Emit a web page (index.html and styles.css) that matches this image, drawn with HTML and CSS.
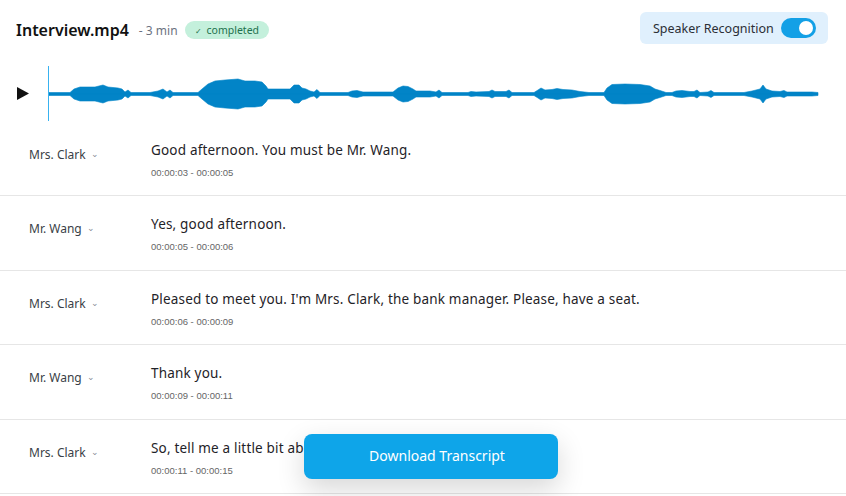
FILE: index.html
```html
<!DOCTYPE html>
<html lang="en">
<head>
<meta charset="utf-8">
<title>Interview.mp4</title>
<link rel="stylesheet" href="styles.css">
</head>
<body>
<div class="page">
  <header class="header">
    <div class="title-group">
      <h1 class="title">Interview.mp4</h1>
      <span class="duration">- 3 min</span>
      <span class="badge"><span class="check">&#10003;</span>completed</span>
    </div>
    <div class="speaker-box">
      <span class="speaker-label">Speaker Recognition</span>
      <span class="toggle"><span class="knob"></span></span>
    </div>
  </header>

  <div class="player">
    <svg class="play" width="12" height="13" viewBox="0 0 12 13"><polygon points="0,0 12,6.5 0,13" fill="#111"/></svg>
    <svg class="wave" width="780" height="57.5" viewBox="44 -30 780 57.5">
      <defs>
        <polygon id="half" points="49,0 49,-1.5 70,-1.5 74,-5 80,-7 95,-7 103,-9 108,-7 118,-6 122,-5 125,-2 128,-4 131,-1.5 150,-1.5 158,-3 163,-5 167,-2 170,-4 173,-1.5 198,-1.5 202,-5 208,-10 215,-13 225,-14 238,-15 245,-13 255,-13 262,-12 266,-8 268,-5 290,-5 294,-9 299,-9 302,-6 306,-5 310,-3 314,-2 317,-4.5 320,-1.5 348,-1.5 352,-3 357,-3.5 363,-2 380,-2 393,-2 398,-6 403,-8 408,-7.5 413,-5 416,-3 430,-3 436,-2 439,-4 442,-1.5 468,-1.5 471,-2.5 476,-2 489,-2.5 492,-4 495,-2.5 506,-2.5 509,-4 512,-1.5 534,-1.5 538,-4 541,-6 545,-4 552,-4.5 557,-5.5 563,-4.5 572,-4 580,-2.5 589,-1.5 604,-1.5 607,-6 612,-9.5 625,-10 640,-9.5 650,-8 655,-5 660,-3.5 666,-1.5 672,-1.5 676,-3 682,-3.5 690,-2.5 694,-2.5 697,-4 700,-1.5 708,-2 711,-3.5 714,-1.5 744,-1.5 752,-3 760,-5 763,-9 766,-5 772,-3 780,-2.5 784,-3.5 787,-2 800,-2 812,-2 818,-1.5 818,0"/>
      </defs>
      <g fill="#0284c7" stroke="#0284c7" stroke-width="0.6" stroke-linejoin="round">
        <use href="#half"/>
        <use href="#half" transform="scale(1,-1)"/>
      </g>
      <line x1="48.5" y1="-28" x2="48.5" y2="27" stroke="#38b2f0" stroke-width="1"/>
    </svg>
  </div>

  <div class="rows">
    <div class="row">
      <div class="speaker">Mrs. Clark <span class="chev">&#8964;</span></div>
      <div class="content">
        <p class="text">Good afternoon. You must be Mr. Wang.</p>
        <p class="time">00:00:03 - 00:00:05</p>
      </div>
    </div>
    <div class="row">
      <div class="speaker">Mr. Wang <span class="chev">&#8964;</span></div>
      <div class="content">
        <p class="text">Yes, good afternoon.</p>
        <p class="time">00:00:05 - 00:00:06</p>
      </div>
    </div>
    <div class="row">
      <div class="speaker">Mrs. Clark <span class="chev">&#8964;</span></div>
      <div class="content">
        <p class="text">Pleased to meet you. I'm Mrs. Clark, the bank manager. Please, have a seat.</p>
        <p class="time">00:00:06 - 00:00:09</p>
      </div>
    </div>
    <div class="row">
      <div class="speaker">Mr. Wang <span class="chev">&#8964;</span></div>
      <div class="content">
        <p class="text">Thank you.</p>
        <p class="time">00:00:09 - 00:00:11</p>
      </div>
    </div>
    <div class="row">
      <div class="speaker">Mrs. Clark <span class="chev">&#8964;</span></div>
      <div class="content">
        <p class="text">So, tell me a little bit about yourself.</p>
        <p class="time">00:00:11 - 00:00:15</p>
      </div>
    </div>
  </div>

  <button class="download">Download Transcript</button>
</div>
</body>
</html>
```

FILE: styles.css
```css
* { box-sizing: border-box; }
html, body { margin: 0; padding: 0; background: #fff; }
body {
  font-family: "Noto Sans", "Liberation Sans", sans-serif;
  color: #1f2328;
  width: 846px;
  height: 496px;
  overflow: hidden;
}
.page { position: relative; width: 846px; height: 496px; }

.header {
  display: flex;
  align-items: center;
  justify-content: space-between;
  padding: 12px 18px 0 16px;
  height: 44px;
}
.title-group { display: flex; align-items: center; margin-top: 4px; }
.title {
  margin: 0;
  font-size: 16px;
  font-weight: 600;
  color: #111;
  line-height: 22px;
}
.duration {
  margin-left: 10px;
  font-size: 12px;
  color: #6b7280;
}
.badge {
  margin-left: 7px;
  height: 18px;
  padding: 0 10px 0 10px;
  border-radius: 9px;
  background: #c4f0dc;
  color: #22704d;
  font-size: 10.5px;
  display: inline-flex;
  align-items: center;
}
.check { font-size: 8px; margin-right: 5px; }

.speaker-box {
  height: 32px;
  width: 188px;
  display: flex;
  align-items: center;
  padding: 0 13px 0 13px;
  background: #e0f0fd;
  border-radius: 6px;
}
.speaker-label { font-size: 12.5px; color: #2b2f36; margin-right: 7px; white-space: nowrap; }
.toggle {
  width: 35px;
  height: 20px;
  flex: none;
  border-radius: 10px;
  background: #13a0e6;
  display: flex;
  align-items: center;
  justify-content: flex-end;
  padding-right: 3px;
}
.knob { width: 14px; height: 14px; border-radius: 50%; background: #fff; }

.player {
  display: flex;
  align-items: center;
  margin-top: 20px;
  height: 57.5px;
}
.play { margin-left: 17px; margin-top: 2px; }
.wave { margin-left: 15px; display: block; }

.rows { display: flex; flex-direction: column; }
.row {
  height: 74.5px;
  border-bottom: 1px solid #e6e6e6;
  display: flex;
  align-items: flex-start;
  padding-top: 18px;
}
.speaker {
  width: 151px;
  padding-left: 29px;
  margin-top: 8px;
  font-size: 12px;
  line-height: 14px;
  color: #3a3f47;
}
.chev { font-size: 9px; color: #8a8f98; margin-left: 2px; position: relative; top: -2px; }
.content { display: flex; flex-direction: column; }
.text { margin: 0; font-size: 13.5px; letter-spacing: 0.18px; line-height: 20px; color: #1f2328; }
.time {
  margin: 7px 0 0;
  font-family: "Liberation Sans", Arial, sans-serif;
  font-size: 9.5px;
  line-height: 12px;
  color: #666;
}

.download {
  position: absolute;
  left: 304px;
  top: 434px;
  width: 254px;
  height: 45px;
  padding: 0 0 2px 12px;
  border: none;
  border-radius: 8px;
  background: #0ea5e9;
  color: #fff;
  font-family: "Noto Sans", "Liberation Sans", sans-serif;
  font-size: 14px;
  box-shadow: 0 10px 28px rgba(0, 0, 0, 0.16);
}
```
